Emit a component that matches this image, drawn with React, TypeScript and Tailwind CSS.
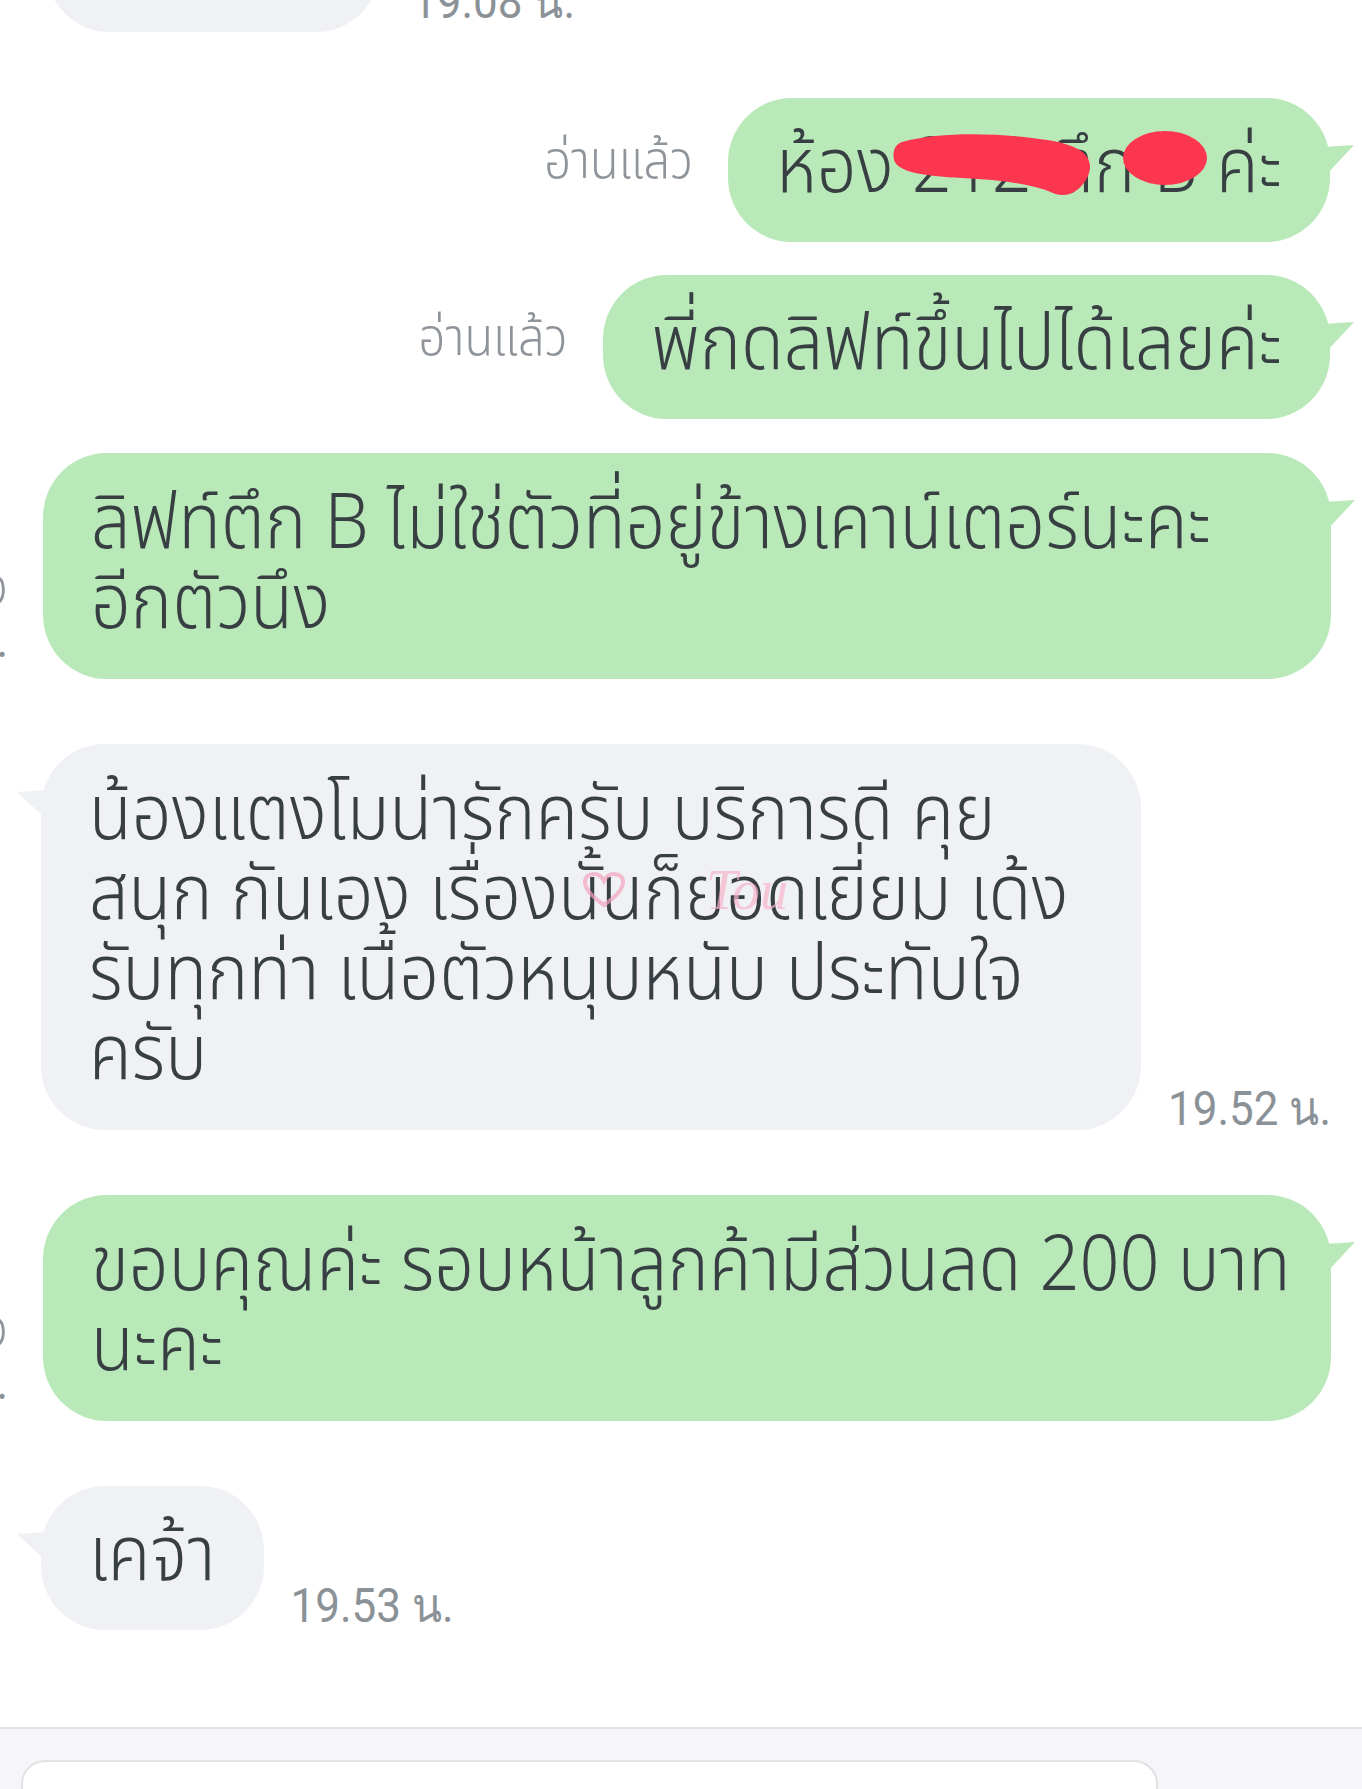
import React from "react";

const THAI = { fontFamily: '"Noto Sans Thai", "Noto Sans Thai UI", Garuda, Loma, "Noto Sans", Roboto, sans-serif' };

const GREEN = "#b9e9b8";
const GRAY = "#f0f1f5";

function Tail({ side, color }: { side: "left" | "right"; color: string }) {
  if (side === "right") {
    return (
      <svg className="absolute top-[47px] -right-[24px]" width="30" height="32" viewBox="0 0 30 32">
        <path d="M0 2 L30 0 L2 30 Z" fill={color} />
      </svg>
    );
  }
  return (
    <svg className="absolute top-[44px] -left-[24px]" width="30" height="32" viewBox="0 0 30 32">
      <path d="M30 2 L0 4 L28 30 Z" fill={color} />
    </svg>
  );
}

function Time({ children }: { children: React.ReactNode }) {
  return (
    <span
      className="inline-block origin-bottom scale-y-[1.1] text-[44px] leading-[52px] text-[#8b9297] whitespace-nowrap"
      style={{ fontFamily: "Roboto, sans-serif" }}
    >
      {children}
    </span>
  );
}

function Read() {
  return (
    <span className="inline-block scale-y-[1.1] text-[47px] leading-[56px] font-[360] text-[#8e9499] whitespace-nowrap" style={THAI}>
      อ่านแล้ว
    </span>
  );
}

function Bubble({
  lines,
  side,
  className = "",
  overlay,
}: {
  lines: string[];
  side: "left" | "right";
  className?: string;
  overlay?: React.ReactNode;
}) {
  const color = side === "right" ? GREEN : GRAY;
  return (
    <div
      className={
        "relative shrink-0 rounded-[64px] px-12 text-[70px] leading-[80px] font-[360] text-[#383f43] whitespace-nowrap " +
        (side === "right" ? "bg-[#b9e9b8] " : "bg-[#f0f1f5] ") +
        (lines.length > 1 ? "py-[33px] " : "py-8 ") +
        className
      }
      style={THAI}
    >
      {lines.map((l, i) => (
        <div key={i} className="h-[80px]">
          <span className="inline-block origin-bottom scale-y-[1.11] translate-y-[3px]">{l}</span>
        </div>
      ))}
      {overlay}
      <Tail side={side} color={color} />
    </div>
  );
}

export default function App() {
  return (
    <div className="w-[1362px] h-[1789px] overflow-hidden bg-white flex flex-col">
      {/* previous message, scrolled mostly out of view */}
      <div className="flex items-end gap-[32px] pl-[46px] -mt-[112px]">
        <div className="h-[144px] w-[334px] rounded-[64px] bg-[#f0f1f5]" />
        <div className="pb-[2px]">
          <Time>19.08 น.</Time>
        </div>
      </div>

      <div className="mt-[66px] flex items-center justify-end gap-[35px] pr-[32px]">
        <div className="-mt-[14px]">
          <Read />
        </div>
        <Bubble
          side="right"
          lines={["ห้อง 212 ตึก B ค่ะ"]}
          overlay={
            <svg className="absolute right-[108px] top-[30px]" width="340" height="72" viewBox="0 0 340 72">
              <path
                d="M20 14 C60 3 120 5 165 12 C198 17 214 28 206 48 C199 63 186 71 171 65 C150 56 120 52 80 50 C40 48 16 44 12 32 C10 22 14 16 20 14 Z"
                fill="#fd3650"
              />
              <ellipse cx="283" cy="30" rx="42" ry="27" fill="#fd3650" />
            </svg>
          }
        />
      </div>

      <div className="mt-[33px] flex items-center justify-end gap-[36px] pr-[32px]">
        <div className="-mt-[14px]">
          <Read />
        </div>
        <Bubble side="right" lines={["พี่กดลิฟท์ขึ้นไปได้เลยค่ะ"]} />
      </div>

      <div className="mt-[34px] flex items-end justify-end gap-[35px] pr-[31px]">
        <div className="shrink-0 flex flex-col items-end pb-[10px]">
          <Read />
          <Time>19.52 น.</Time>
        </div>
        <Bubble
          side="right"
          className="w-[1288px]"
          lines={["ลิฟท์ตึก B ไม่ใช่ตัวที่อยู่ข้างเคาน์เตอร์นะคะ", "อีกตัวนึง"]}
        />
      </div>

      <div className="mt-[65px] flex items-end gap-[27px] pl-[41px]">
        <Bubble
          side="left"
          className="w-[1100px]"
          lines={[
            "น้องแตงโมน่ารักครับ บริการดี คุย",
            "สนุก กันเอง เรื่องนั้นก็ยอดเยี่ยม เด้ง",
            "รับทุกท่า เนื้อตัวหนุบหนับ ประทับใจ",
            "ครับ",
          ]}
          overlay={
            <div className="absolute left-[541px] top-[120px] flex items-center gap-[80px] opacity-70 pointer-events-none">
              <svg width="44" height="36" viewBox="0 0 44 36">
                <path
                  d="M22 33 C9 24 3 17 3 10 C3 5 7 2 12 2 C16 2 20 5 22 9 C24 5 28 2 32 2 C37 2 41 5 41 10 C41 17 35 24 22 33 Z"
                  fill="none"
                  stroke="#f4a3bd"
                  strokeWidth="4"
                />
              </svg>
              <span className="text-[56px] leading-[52px] italic text-[#f6b5c9]" style={{ fontFamily: '"Liberation Serif", serif' }}>
                Tou
              </span>
            </div>
          }
        />
        <div className="-mb-[7px]">
          <Time>19.52 น.</Time>
        </div>
      </div>

      <div className="mt-[65px] flex items-end justify-end gap-[35px] pr-[31px]">
        <div className="shrink-0 flex flex-col items-end pb-[10px]">
          <Read />
          <Time>19.52 น.</Time>
        </div>
        <Bubble side="right" className="w-[1288px]" lines={["ขอบคุณค่ะ รอบหน้าลูกค้ามีส่วนลด 200 บาท", "นะคะ"]} />
      </div>

      <div className="mt-[65px] flex items-end gap-[27px] pl-[41px]">
        <Bubble side="left" lines={["เคจ้า"]} />
        <div className="-mb-[4px]">
          <Time>19.53 น.</Time>
        </div>
      </div>

      <div className="flex-1" />

      {/* input bar */}
      <div className="h-[62px] shrink-0 border-t-2 border-[#e2e3e7] bg-[#f6f6f9] pt-[31px] pl-[21px]">
        <div className="h-[60px] w-[1137px] rounded-t-[24px] border-2 border-b-0 border-[#e1e2e6] bg-white" />
      </div>
    </div>
  );
}
